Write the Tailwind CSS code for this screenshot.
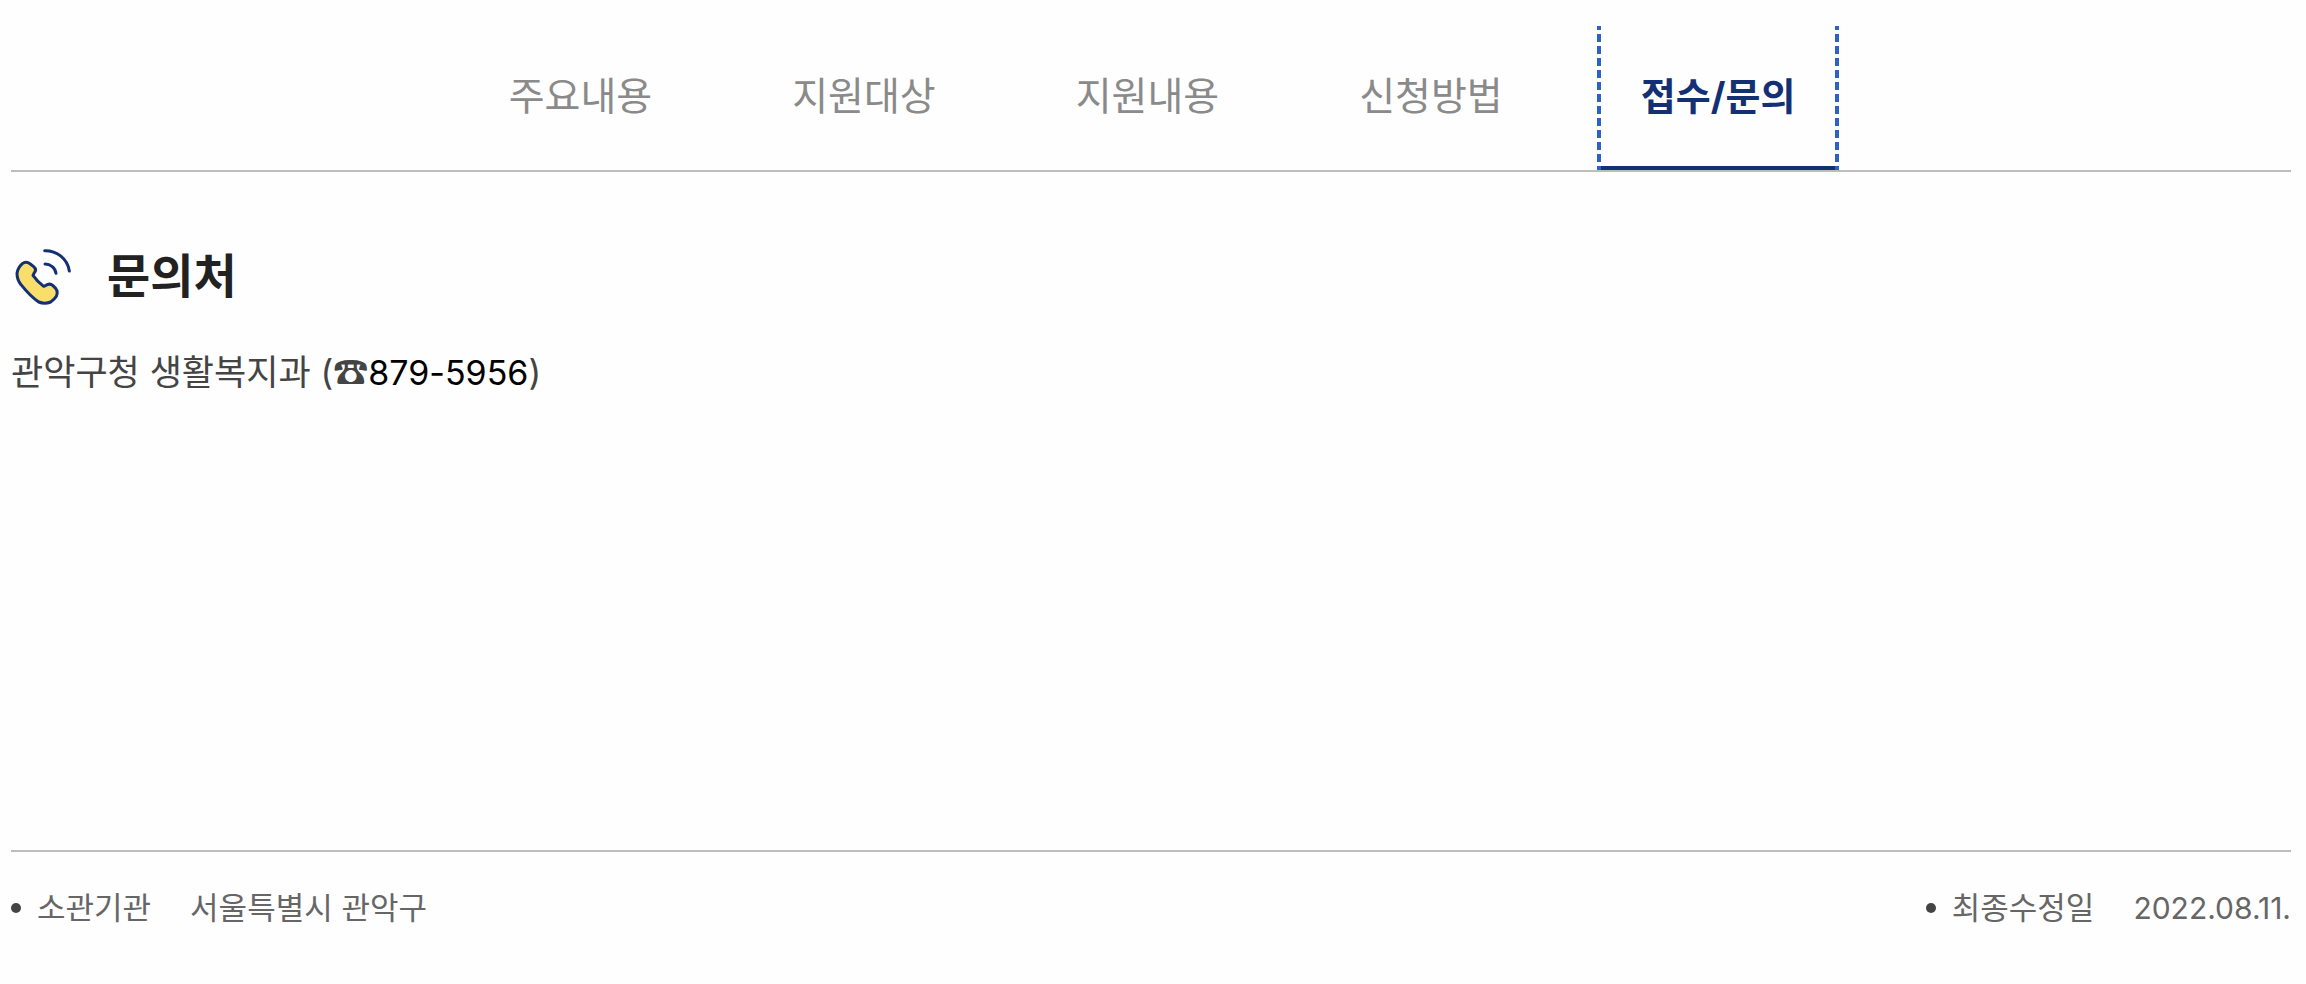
<!DOCTYPE html>
<html lang="ko">
<head>
    <meta charset="UTF-8">
    <meta name="viewport" content="width=device-width, initial-scale=1.0">
    <title>접수/문의</title>
    <script src="https://cdn.jsdelivr.net/npm/@tailwindcss/browser@4"></script>
</head>

<body class="bg-[#fefefe] min-h-screen font-[Inter,'Noto_Sans_CJK_KR',sans-serif] text-[#444]">
    <div class="pl-[11px] pr-[15px] pt-[26px]">
        <!-- Tabs -->
        <nav class="flex justify-center gap-12 border-b-2 border-[#bdbdbd] text-[39px] leading-[56px] text-[#8a8a8a]">
            <a href="#summary" class="px-[46px] pt-[42px] pb-[46px]">주요내용</a>
            <a href="#target" class="px-[46px] pt-[42px] pb-[46px]">지원대상</a>
            <a href="#support" class="px-[46px] pt-[42px] pb-[46px]">지원내용</a>
            <a href="#apply" class="px-[46px] pt-[42px] pb-[46px]">신청방법</a>
            <a href="#contact" aria-current="page" class="relative px-[44px] pt-[42px] pb-[46px] text-[38px] font-bold text-[#143074]">
                접수/문의
                <span class="absolute inset-x-0 bottom-0 h-1 bg-[#143074]"></span>
                <span class="absolute left-0 inset-y-0 w-1 bg-[repeating-linear-gradient(to_top,#2b62c9_0px_4px,#fefefe_4px_8px,#2b62c9_8px_12px)]"></span>
                <span class="absolute right-0 inset-y-0 w-1 bg-[repeating-linear-gradient(to_top,#2b62c9_0px_4px,#fefefe_4px_8px,#2b62c9_8px_12px)]"></span>
            </a>
        </nav>

        <!-- Contact -->
        <main id="contact" class="min-h-[678px] pt-[74px]">
            <div class="flex items-center gap-[36px]">
                <svg class="size-[60px]" viewBox="33 30 180 180" fill="none" stroke="#143074" stroke-width="9" stroke-linecap="round" stroke-linejoin="round" aria-hidden="true">
                    <path fill="#f9de6b" d="M67 83Q78 74 91 84L101 92Q111 101 103 110L99 118Q112 137 131 151L138 148Q149 140 159 149L167 157Q175 167 169 181Q163 191 152 198Q134 205 116 198Q91 181 63 146Q51 132 51 112Q53 96 67 83Z"/>
                    <path d="M134 44C170 43 203 68 208 105"/>
                    <path d="M135 84C151 84 166 95 168 112"/>
                </svg>
                <h2 class="text-[47px] leading-[60px] font-bold text-[#222]">문의처</h2>
            </div>
            <p class="mt-[40px] text-[35px] leading-[52px]">관악구청 생활복지과 (☎<a href="tel:879-5956" class="text-[34px] text-black">879-5956</a>)</p>
        </main>

        <!-- Page info -->
        <footer class="flex justify-between border-t-2 border-[#bdbdbd] pt-[33px] text-[31px] leading-[46px] text-[#666]">
            <dl class="flex items-center">
                <dt class="flex items-center gap-4"><span class="size-[10px] rounded-full bg-[#444]"></span>소관기관</dt>
                <dd class="ml-[39px]">서울특별시 관악구</dd>
            </dl>
            <dl class="flex items-center">
                <dt class="flex items-center gap-4"><span class="size-[10px] rounded-full bg-[#444]"></span>최종수정일</dt>
                <dd class="ml-[39px] text-[30px]">2022.08.11.</dd>
            </dl>
        </footer>
    </div>
</body>
</html>
